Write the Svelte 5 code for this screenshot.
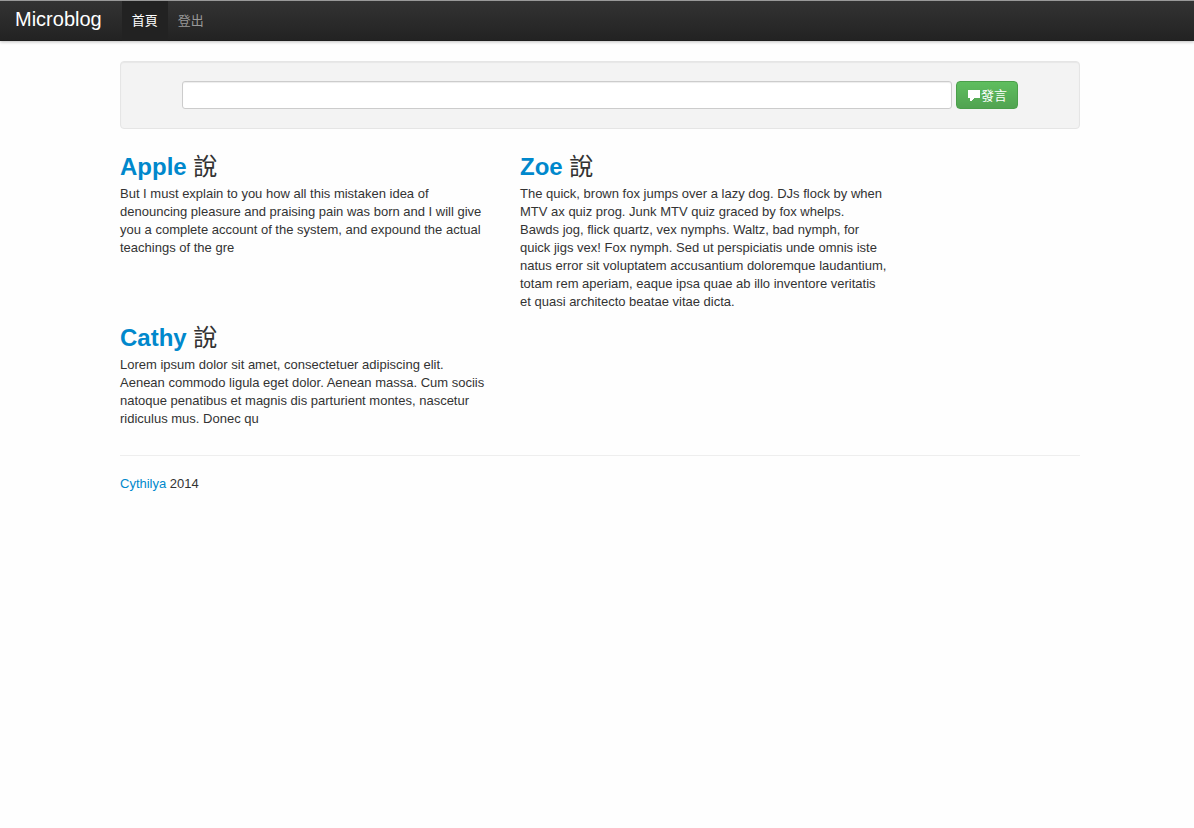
<script>
  const posts = [
    { user: 'Apple', text: 'But I must explain to you how all this mistaken idea of denouncing pleasure and praising pain was born and I will give you a complete account of the system, and expound the actual teachings of the gre' },
    { user: 'Zoe', text: 'The quick, brown fox jumps over a lazy dog. DJs flock by when MTV ax quiz prog. Junk MTV quiz graced by fox whelps.\nBawds jog, flick quartz, vex nymphs. Waltz, bad nymph, for quick jigs vex! Fox nymph. Sed ut perspiciatis unde omnis iste natus error sit voluptatem accusantium doloremque laudantium, totam rem aperiam, eaque ipsa quae ab illo inventore veritatis\net quasi architecto beatae vitae dicta.' },
    { user: 'Cathy', text: 'Lorem ipsum dolor sit amet, consectetuer adipiscing elit. Aenean commodo ligula eget dolor. Aenean massa. Cum sociis natoque penatibus et magnis dis parturient montes, nascetur ridiculus mus. Donec qu' }
  ];
  let message = $state('');
</script>

<header class="navbar">
  <a class="brand" href="#home">Microblog</a>
  <nav>
    <a class="active" href="#home">首頁</a>
    <a href="#logout">登出</a>
  </nav>
</header>

<main class="container">
  <form class="well" onsubmit={(e) => e.preventDefault()}>
    <input type="text" aria-label="發言" bind:value={message} />
    <button type="submit">
      <svg viewBox="0 0 14 14" aria-hidden="true"><path d="M1 1h12v8H7v1H6v1H5v1H3V9H1z" fill="#fff" /></svg>發言
    </button>
  </form>

  <section class="posts">
    {#each posts as post}
      <article>
        <h2><a href="#{post.user}">{post.user}</a> 說</h2>
        <p>{post.text}</p>
      </article>
    {/each}
  </section>

  <footer><a href="#cythilya">Cythilya</a> 2014</footer>
</main>

<style>
  :global(body) {
    margin: 0;
    background: #fefefe;
    color: #333;
    font: 13px/18px "Liberation Sans", Arial, "Noto Sans CJK TC", sans-serif;
  }
  a {
    color: #0088cc;
    text-decoration: none;
  }
  .navbar {
    display: flex;
    box-sizing: border-box;
    height: 41px;
    border-top: 1px solid #999;
    background: linear-gradient(#333, #222);
    box-shadow: 0 1px 3px rgba(0, 0, 0, 0.25), inset 0 -1px 0 rgba(0, 0, 0, 0.1);
  }
  .brand {
    padding: 8px 20px 12px 15px;
    color: #fff;
    font-size: 20px;
    line-height: 20px;
  }
  nav {
    display: flex;
  }
  nav a {
    padding: 11px 10px;
    color: #999;
    line-height: 18px;
  }
  nav .active {
    background: #222;
    color: #fff;
  }
  .container {
    max-width: 960px;
    margin: 0 auto;
    padding: 20px 0 20px 6px;
  }
  .well {
    display: flex;
    justify-content: center;
    gap: 4px;
    box-sizing: border-box;
    margin: 0 0 20px;
    padding: 19px 61px;
    border: 1px solid #e5e5e5;
    border-radius: 4px;
    background: #f3f3f3;
    box-shadow: inset 0 1px 1px rgba(0, 0, 0, 0.05);
  }
  input {
    flex: 1;
    min-width: 0;
    box-sizing: border-box;
    height: 28px;
    padding: 4px;
    border: 1px solid #ccc;
    border-radius: 3px;
    background: #fff;
    box-shadow: inset 0 1px 1px rgba(0, 0, 0, 0.075);
    color: #555;
    font: inherit;
  }
  button {
    display: flex;
    align-items: center;
    height: 28px;
    padding: 1px 10px 0;
    border: 1px solid #4a9f4a;
    border-radius: 4px;
    background: linear-gradient(#5fbe5f, #51a351);
    color: #fff;
    font: inherit;
  }
  button svg {
    width: 14px;
    height: 14px;
  }
  .posts {
    display: grid;
    grid-template-columns: repeat(auto-fill, 370px);
    gap: 9px 30px;
  }
  h2 {
    margin: 0;
    font-size: 24px;
    font-weight: 400;
    line-height: 36px;
  }
  h2 a {
    font-weight: 700;
  }
  p {
    margin: 0;
    white-space: pre-line;
  }
  footer {
    margin-top: 27px;
    padding-top: 19px;
    border-top: 1px solid #eee;
  }
</style>
